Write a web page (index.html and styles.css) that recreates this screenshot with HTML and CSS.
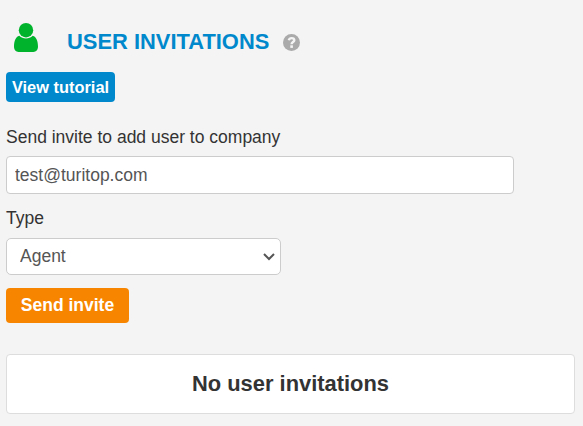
FILE: index.html
```html
<!DOCTYPE html>
<html lang="en">
<head>
    <meta charset="UTF-8">
    <meta name="viewport" content="width=device-width, initial-scale=1.0">
    <title>User invitations</title>
    <link rel="stylesheet" href="styles.css">
</head>

<body>
    <div class="container">
        <div class="header">
            <svg class="user-icon" viewBox="0 0 24 29">
                <circle cx="12" cy="7.2" r="7.2" />
                <path d="M5.3 12.7C1.7 13.7 0 18 0 23.8C0 26.9 1.9 29 4.6 29H19.4C22.1 29 24 26.9 24 23.8C24 18 22.3 13.7 18.7 12.7C16.9 14.4 14.6 15.4 12 15.4S7.1 14.4 5.3 12.7Z" />
            </svg>
            <h1 class="title">USER INVITATIONS</h1>
            <svg class="help-icon" viewBox="0 0 17 17">
                <circle cx="8.5" cy="8.5" r="8.5" />
                <path class="mark" d="M5.8 6.2C6.2 4.7 7.2 4.1 8.6 4.1C10.2 4.1 11.3 5 11.3 6.3C11.3 8.1 8.6 8.1 8.6 10.2" />
                <rect class="dot" x="7.3" y="11.3" width="2.6" height="2.6" />
            </svg>
        </div>
        <button class="btn tutorialbtn">View tutorial</button>
        <form class="invite">
            <label for="email">Send invite to add user to company</label>
            <input type="text" id="email" class="field email" value="test@turitop.com">
            <label for="type">Type</label>
            <div class="select">
                <select id="type" class="field type">
                    <option>Agent</option>
                </select>
                <svg class="arrow" viewBox="0 0 12 8">
                    <path d="M1 1L6 6L11 1" />
                </svg>
            </div>
            <button type="button" class="btn sendbtn">Send invite</button>
        </form>
        <div class="panel">No user invitations</div>
    </div>
</body>

</html>
```
FILE: styles.css
```css
* {
    margin: 0;
    padding: 0;
    box-sizing: border-box;
    font-family: "Liberation Sans", Arial, sans-serif;
}

body {
    background: #f4f4f4;
    color: #333;
    font-size: 17.5px;
    line-height: 25px;
}

.container {
    padding: 12px 8px 12px 6px;
}

.header {
    display: flex;
    align-items: center;
    height: 60px;
}

.user-icon {
    width: 24px;
    height: 29px;
    margin: 0 29px 9px 8px;
    fill: #00b32d;
}

.title {
    color: #0088cc;
    font-size: 21.9px;
    line-height: 30px;
    font-weight: bold;
}

.help-icon {
    width: 17px;
    height: 17px;
    margin-left: 14px;
    fill: #aaa;
}

.help-icon .mark {
    fill: none;
    stroke: #f4f4f4;
    stroke-width: 2.4;
}

.help-icon .dot {
    fill: #f4f4f4;
}

.btn {
    display: block;
    border: none;
    border-radius: 4px;
    color: white;
    font-weight: bold;
    cursor: pointer;
}

.tutorialbtn {
    width: 109px;
    height: 30px;
    margin-bottom: 23px;
    padding-top: 1px;
    background-color: #0088cc;
    font-size: 16.4px;
}

.invite label {
    display: block;
}

.field {
    display: block;
    height: 38px;
    background-color: white;
    border: 1px solid #ccc;
    border-radius: 4px;
    color: #555;
    font-size: 17.5px;
}

.email {
    width: 508px;
    margin: 6px 0 12px;
    padding: 0 8px;
}

.select {
    position: relative;
    width: 275px;
    margin: 7px 0 13px;
}

.type {
    width: 100%;
    height: 37px;
    padding: 0 13px 2px;
    border-radius: 5px;
    appearance: none;
}

.arrow {
    position: absolute;
    top: 15px;
    right: 6px;
    width: 12px;
    height: 8px;
    fill: none;
    stroke: #555;
    stroke-width: 2;
}

.sendbtn {
    width: 123px;
    height: 35px;
    background-color: #f78500;
    font-size: 17.5px;
}

.panel {
    height: 60px;
    margin-top: 31px;
    background-color: white;
    border: 1px solid #ddd;
    border-radius: 4px;
    font-size: 21.9px;
    font-weight: bold;
    line-height: 58px;
    text-align: center;
}
```
